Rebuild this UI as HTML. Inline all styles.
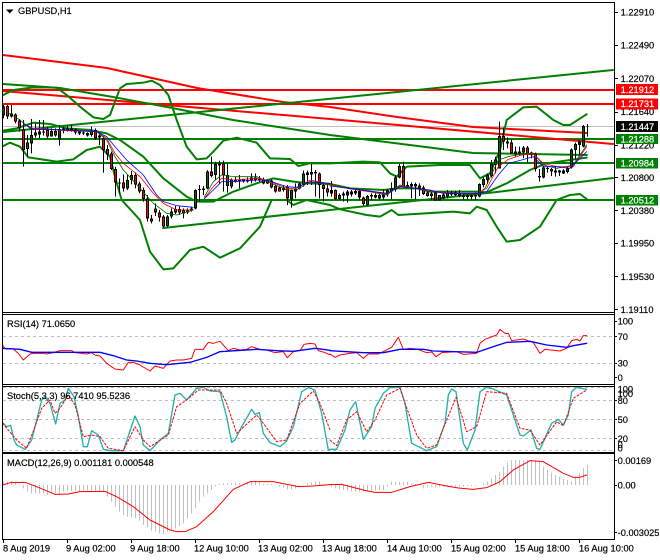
<!DOCTYPE html>
<html><head><meta charset="utf-8"><style>
html,body{margin:0;padding:0;background:#fff;width:660px;height:560px;overflow:hidden}
svg{display:block}
text{font-family:"Liberation Sans",sans-serif;font-size:9.3px;fill:#000;stroke:#000;stroke-width:.18px}
.w{fill:#fff;stroke:#fff}
polyline{stroke-linejoin:round;stroke-linecap:round}
</style></head><body>
<svg width="660" height="560" viewBox="0 0 660 560" xmlns="http://www.w3.org/2000/svg">
<rect width="660" height="560" fill="#fff"/>
<!-- horizontal lines -->
<g shape-rendering="crispEdges" fill="none">
<path d="M3 126.5H614" stroke="#c0c0c0"/>
<path d="M3 90H614M3 104H614" stroke="#f00" stroke-width="2"/>
<path d="M3 139H614M3 163H614M3 200H614" stroke="#008000" stroke-width="2"/>
</g>
<!-- trend lines -->
<g fill="none" stroke-width="2">
<polyline stroke="#f00" points="3,55 107,68 197,88 283,102 330,107 397,117 473,127 587,133"/>
<polyline stroke="#f00" points="3,91 330,119 613,144"/>
<polyline stroke="#008000" points="3,132 613,70"/>
<polyline stroke="#008000" points="3,84 60,88 113,97 167,107 233,120 330,135 473,153 587,155"/>
<polyline stroke="#008000" points="163,228 330,210 497,192 613,178"/>
</g>
<!-- bollinger -->
<g transform="scale(.33333)" fill="none" stroke="#008000" stroke-width="6">
<polyline points="10,285 40,270 100,262 170,263 200,285 240,320 280,352 310,357 330,345 360,265 380,252 430,248 455,242 480,255 505,285 530,360 560,440 590,478 620,475 640,455 670,422 710,413 770,428 810,475 870,477 895,498 930,490 990,490"/>
<polyline points="10,392 50,385 100,368 150,372 200,385 270,390 320,400 360,420 430,470 490,535 560,590 590,605 640,605 700,575 770,550 820,535 880,545 930,550 990,552"/>
<polyline points="10,438 30,428 60,440 85,472 170,485 220,478 260,450 300,440 330,470 345,530 365,600 420,660 450,755 490,808 520,805 570,750 610,740 660,773 720,745 780,680 815,600 860,600 880,615 920,600 990,615"/>
</g>
<g transform="translate(330,0) scale(.33333)" fill="none" stroke="#008000" stroke-width="6">
<polyline points="0,490 100,485 150,487 180,520 200,530 230,500 330,495 420,495 450,535 480,520 510,450 530,360 580,322 620,320 670,360 700,375 720,375 740,362 770,343"/>
<polyline points="0,552 60,565 160,570 200,565 260,565 300,575 440,575 470,577 530,550 600,510 650,490 770,473"/>
<polyline points="0,615 30,628 110,645 150,650 185,630 205,645 370,635 420,640 440,620 470,630 500,680 530,725 570,720 630,680 680,600 720,585 750,582 770,597"/>
</g>
<!-- candles -->
<g fill="none" shape-rendering="crispEdges">
<g transform="translate(0,95) scale(1,.33333)">
<path stroke="#000" d="M3.5 30V70M7.5 30V72M11.5 30V68M15.5 55V85M19.5 72V110M23.5 75V215M27.5 120V185M31.5 72V175M35.5 85V128M39.5 75V130M43.5 75V122M47.5 95V130M51.5 100V125M55.5 100V125M59.5 90V152M63.5 95V115M67.5 92V110M71.5 90V110M75.5 100V118M79.5 108V120M83.5 108V120M87.5 112V125M91.5 95V125M95.5 100V135M99.5 115V150M103.5 125V233M107.5 150V195M111.5 170V225M115.5 215V305M119.5 250V295M123.5 238V290M127.5 240V285M131.5 228V268M135.5 232V280M139.5 260V295M143.5 278V320M147.5 300V380"/>
<path stroke="#000" stroke-width="3" d="M3.5 35V62M7.5 33V65M11.5 56V64M15.5 58V80M19.5 76V100M23.5 103V165M27.5 143V162M31.5 120V146M35.5 113V122M39.5 110V118M43.5 110V113M47.5 105V125M51.5 108V125M55.5 108V122M59.5 102V133M63.5 100V105M67.5 100V106M71.5 100V105M75.5 103V112M79.5 110V116M83.5 112V116M87.5 114V122M91.5 108V120M95.5 105V130M99.5 122V128M103.5 130V165M107.5 162V178M111.5 175V222M115.5 222V262M119.5 262V266M123.5 262V280M127.5 255V280M131.5 240V255M135.5 240V268M139.5 266V290M143.5 285V312M147.5 310V370"/>
<path stroke="#f00" d="M7.5 36V62M15.5 61V77M19.5 79V97M23.5 106V162M47.5 108V122M55.5 111V119M75.5 106V109M95.5 108V127M103.5 133V162M107.5 165V175M111.5 178V219M115.5 225V259M123.5 265V277M135.5 243V265M139.5 269V287M143.5 288V309M147.5 313V367"/>
<path stroke="#006400" d="M3.5 38V59M27.5 146V159M31.5 123V143M35.5 116V119M51.5 111V122M59.5 105V130M91.5 111V117M127.5 258V277M131.5 243V252"/>
</g>
<g transform="translate(0,140) scale(1,.33333)">
<path stroke="#000" d="M151.5 225V250M155.5 190V228M159.5 210V245M163.5 225V262M167.5 225V262M171.5 205V235M175.5 198V222M179.5 200V225M183.5 205V235M187.5 205V222M191.5 200V215M195.5 148V208M199.5 135V185M203.5 138V165M207.5 90V148M211.5 50V112M215.5 65V120M219.5 62V130M223.5 62V155M227.5 70V158M231.5 115V145M235.5 110V128M239.5 105V145M243.5 118V128M247.5 112V128M251.5 100V130M255.5 100V125M259.5 108V125M263.5 113V133M267.5 118V132M271.5 118V145M275.5 133V158M279.5 140V155M283.5 135V155M287.5 135V195M291.5 148V203M295.5 130V175M299.5 128V148M303.5 92V140M307.5 92V135M311.5 72V135M315.5 90V170M319.5 97V175M323.5 128V185M327.5 130V170M331.5 123V170M335.5 148V178M339.5 160V180M343.5 155V185M347.5 150V188M351.5 150V170M355.5 150V165M359.5 150V178M363.5 170V197M367.5 165V197M371.5 160V180M375.5 160V175M379.5 158V178M383.5 148V178M387.5 148V170M391.5 127V178M395.5 105V155M399.5 72V115M403.5 65V142M407.5 125V143M411.5 127V175M415.5 128V178M419.5 130V168M423.5 137V165M427.5 155V170M431.5 155V180M435.5 155V183M439.5 165V182M443.5 160V178M447.5 150V175"/>
<path stroke="#000" stroke-width="3" d="M151.5 235V245M155.5 205V217M159.5 218V232M163.5 230V260M167.5 230V258M171.5 215V230M175.5 207V218M179.5 207V218M183.5 210V220M187.5 212V218M191.5 205V212M195.5 150V205M199.5 147V150M203.5 145V150M207.5 95V145M211.5 95V108M215.5 72V105M219.5 70V76M223.5 70V107M227.5 105V138M231.5 118V140M235.5 118V125M239.5 118V125M243.5 118V125M247.5 120V125M251.5 112V122M255.5 112V120M259.5 115V122M263.5 118V130M267.5 120V130M271.5 122V143M275.5 138V155M279.5 143V155M283.5 143V150M287.5 140V175M291.5 150V178M295.5 147V155M299.5 130V145M303.5 100V135M307.5 98V105M311.5 96V104M315.5 96V100M319.5 100V135M323.5 135V147M327.5 145V158M331.5 150V160M335.5 150V177M339.5 165V177M343.5 160V167M347.5 155V167M351.5 155V163M355.5 153V160M359.5 153V173M363.5 172V192M367.5 168V195M371.5 165V170M375.5 165V172M379.5 165V175M383.5 163V172M387.5 152V163M391.5 145V155M395.5 112V148M399.5 78V113M403.5 78V140M407.5 135V140M411.5 132V140M415.5 132V140M419.5 137V147M423.5 143V162M427.5 158V168M431.5 160V168M435.5 158V182M439.5 165V182M443.5 163V175M447.5 158V170"/>
<path stroke="#f00" d="M151.5 238V242M155.5 208V214M159.5 221V229M163.5 233V257M179.5 210V215M183.5 213V217M211.5 98V105M223.5 73V104M239.5 121V122M263.5 121V127M271.5 125V140M275.5 141V152M279.5 146V152M287.5 143V172M299.5 133V142M319.5 103V132M323.5 138V144M327.5 148V155M335.5 153V174M363.5 175V189M403.5 81V137M423.5 146V159M427.5 161V165M435.5 161V179"/>
<path stroke="#006400" d="M167.5 233V255M171.5 218V227M175.5 210V215M187.5 214V216M195.5 153V202M207.5 98V142M215.5 75V102M227.5 108V135M231.5 121V137M247.5 122V123M251.5 115V119M255.5 115V117M267.5 123V127M291.5 153V175M299.5 133V142M303.5 103V132M339.5 168V174M367.5 171V192M379.5 168V172M387.5 155V160M391.5 148V152M395.5 115V145M399.5 81V110M419.5 140V144M431.5 163V165M439.5 168V179M443.5 166V172M447.5 161V167"/>
</g>
<g transform="translate(0,100) scale(1,.33333)">
<path stroke="#000" d="M451.5 272V288M455.5 272V288M459.5 270V292M463.5 283V298M467.5 283V298M471.5 280V298M475.5 278V300M479.5 250V292M483.5 232V262M487.5 220V252M491.5 180V232M495.5 170V220M499.5 65V205M503.5 82V150M507.5 112V145M511.5 118V162M515.5 140V170M519.5 140V168M523.5 138V175M527.5 138V188M531.5 155V175M535.5 158V215M539.5 207V245M543.5 198V235M547.5 200V218M551.5 204V228M555.5 200V230M559.5 210V228M563.5 208V222M567.5 198V220M571.5 145V206M575.5 128V178M579.5 120V165M583.5 75V142M587.5 72V110"/>
<path stroke="#000" stroke-width="3" d="M451.5 278V283M455.5 278V285M459.5 280V288M463.5 287V291M467.5 287V291M471.5 287V291M475.5 285V290M479.5 252V290M483.5 237V255M487.5 225V240M491.5 190V228M495.5 178V195M499.5 108V205M503.5 108V125M507.5 125V130M511.5 128V160M515.5 155V163M519.5 155V160M523.5 142V158M527.5 142V162M531.5 158V165M535.5 160V207M539.5 228V232M543.5 202V232M547.5 204V207M551.5 207V214M555.5 212V218M559.5 212V218M563.5 212V220M567.5 205V216M571.5 148V203M575.5 132V150M579.5 125V135M583.5 78V140"/>
<path stroke="#000" d="M586 79.5H589"/>
<path stroke="#f00" d="M463.5 288V289M503.5 111V122M511.5 131V157M527.5 145V159M535.5 163V204M551.5 209V211"/>
<path stroke="#006400" d="M479.5 255V287M483.5 240V252M487.5 228V237M491.5 193V225M495.5 181V192M499.5 111V202M515.5 158V160M523.5 145V155M543.5 205V229M567.5 208V213M571.5 151V200M575.5 135V147M583.5 81V137"/>
</g>
</g>
<!-- moving averages -->
<g transform="scale(.33333)" fill="none" stroke-width="2.4">
<polyline stroke="#006400" points="20,335 60,360 90,385 200,390 290,395 320,420 345,470 370,510 420,565 460,610 500,640 530,645 580,630"/>
<polyline stroke="#006400" points="613,590 640,545 665,525 700,530 770,530 860,570 890,570 930,545 990,555"/>
<polyline stroke="#f00" points="70,372 100,385 200,392 290,395 320,415 345,460 370,490 420,530 460,580 490,610 530,630 580,630"/>
<polyline stroke="#f00" points="613,595 640,560 665,535 700,540 770,535 800,540 860,565 890,565 930,540 990,552"/>
<polyline stroke="#00f" points="70,370 100,388 200,390 290,395 320,410 345,440 380,480 430,525 470,585 490,605 530,617 580,622"/>
<polyline stroke="#00f" points="613,596 640,570 665,545 700,545 770,540 800,540 830,550 860,560 890,562 930,545 990,550"/>
</g>
<g transform="translate(330,0) scale(.33333)" fill="none" stroke-width="2.4">
<polyline stroke="#006400" points="0,552 170,585 210,555 300,575 440,585 465,565 505,480 535,470 575,462 610,460 640,495 680,505 730,495 770,435"/>
<polyline stroke="#f00" points="0,555 80,570 170,582 210,558 300,572 340,578 440,582 470,565 505,500 535,478 575,465 610,462 640,490 680,500 730,500 770,440"/>
<polyline stroke="#00f" points="0,558 80,568 170,580 210,560 300,570 340,580 440,580 470,575 505,525 535,490 575,480 610,470 640,500 680,500 720,505 770,455"/>
</g>
<!-- level lines -->
<g shape-rendering="crispEdges" fill="none" stroke="#c0c0c0" stroke-dasharray="3 3">
<path d="M3 336.5H614M3 363.5H614M3 387.5H614M3 400.5H614M3 419.5H614M3 438.5H614M3 450.5H614"/>
</g>
<!-- RSI -->
<g transform="translate(0,280) scale(.33333)" fill="none" stroke-width="3">
<polyline stroke="#f00" points="8,195 15,207 40,207 55,220 70,240 90,222 100,220 130,220 140,222 160,218 180,212 215,212 225,218 260,222 275,218 285,225 300,228 320,250 345,267 370,270 385,247 400,247 420,255 450,273 465,258 490,265 510,243 530,240 550,240 575,235 585,208 610,208 625,187 640,190 660,184 685,212 700,205 720,210 740,208 755,200 780,208 800,210 825,218 850,215 862,233 880,215 900,212 912,193 930,190 945,192 955,212 975,218 990,224"/>
<polyline stroke="#00f" stroke-width="4" points="8,205 60,208 95,217 300,217 340,227 380,240 410,243 450,250 500,254 570,247 620,232 660,215 770,208 830,212 880,214 945,205 990,211"/>
<polyline stroke="#20b2aa" stroke-width="4" points="8,428 20,440 32,436 42,480 50,495 75,508 95,480 110,420 125,360 135,352 150,370 167,432 180,370 195,360 205,325 222,350 235,410 250,500 262,500 275,452 295,465 310,508 330,512 370,512 405,408 420,440 430,495 450,512 480,480 505,460 525,345 540,340 560,360 590,325 610,322 630,333 660,335 680,410 695,487 705,480 725,440 755,388 765,403 778,398 790,460 810,488 840,500 860,483 880,440 905,335 925,323 945,330 965,400 985,510 990,510"/>
<polyline stroke="#f00" stroke-dasharray="6 6" points="8,430 50,480 80,505 105,440 125,385 150,360 165,400 180,385 205,345 225,375 250,470 275,465 300,470 325,505 370,512 405,440 430,480 450,500 505,465 530,380 560,360 595,330 660,330 680,370 710,460 770,405 790,430 830,485 860,480 900,370 940,333 960,370 990,450"/>
</g>
<g transform="translate(330,280) scale(.33333)" fill="none" stroke-width="3">
<polyline stroke="#f00" points="0,222 15,232 30,225 60,220 80,218 100,235 115,222 145,222 165,212 185,202 205,172 220,208 240,205 260,207 290,218 305,216 318,230 335,218 380,215 400,223 440,220 450,190 465,178 500,165 510,148 525,160 535,160 545,182 580,177 610,188 630,220 645,208 690,213 710,205 725,182 740,178 750,183 760,167 770,167"/>
<polyline stroke="#00f" stroke-width="4" points="0,212 100,218 160,218 210,208 280,208 310,213 440,217 490,200 530,187 600,184 650,195 710,202 730,197 770,190"/>
<polyline stroke="#20b2aa" stroke-width="4" points="0,508 20,508 45,450 60,390 77,365 100,478 125,440 135,385 160,340 180,323 210,322 225,370 245,490 290,512 320,500 345,430 355,345 365,327 378,335 400,490 412,510 435,450 450,335 470,322 490,327 530,345 570,465 580,468 603,450 620,505 630,508 665,430 685,418 700,435 715,405 725,335 740,322 770,328"/>
<polyline stroke="#f00" stroke-dasharray="6 6" points="0,480 20,497 50,420 80,395 110,455 135,420 170,345 210,325 225,370 260,465 290,505 320,495 350,420 378,352 410,455 440,440 470,335 530,340 570,445 600,450 630,495 680,425 700,437 730,355 770,330"/>
</g>
<!-- MACD histogram -->
<g transform="translate(0,280) scale(1,.33333)" shape-rendering="crispEdges" fill="none">
<path stroke="#c0c0c0" d="M3.5 615V605M7.5 615V605M11.5 615V603M15.5 615V605M19.5 615V612M23.5 615V625M27.5 615V635M31.5 615V640M35.5 615V640M39.5 615V640M43.5 615V640M47.5 615V645M51.5 615V640M55.5 615V640M59.5 615V640M63.5 615V635M67.5 615V633M71.5 615V633M75.5 615V633M79.5 615V633M83.5 615V632M87.5 615V632M91.5 615V632M95.5 615V633M99.5 615V633M103.5 615V632M107.5 615V650M111.5 615V665M115.5 615V680M119.5 615V695M123.5 615V705M127.5 615V710M131.5 615V712M135.5 615V715M139.5 615V722M143.5 615V735M147.5 615V743M151.5 615V752M155.5 615V755M159.5 615V760M163.5 615V762M167.5 615V755M171.5 615V750M175.5 615V745M179.5 615V738M183.5 615V730M187.5 615V715M191.5 615V700M195.5 615V685M199.5 615V665M203.5 615V650M207.5 615V640M211.5 615V630M215.5 615V620M219.5 615V612M223.5 615V610M227.5 615V610M231.5 615V610M235.5 615V608M239.5 615V610M243.5 615V610M247.5 615V605M251.5 615V605M255.5 615V605M259.5 615V608M263.5 615V612M267.5 615V612M271.5 615V612M279.5 615V620M283.5 615V622M287.5 615V628M291.5 615V628M295.5 615V625M299.5 615V620M307.5 615V610M311.5 615V608M315.5 615V604M319.5 615V604M323.5 615V612M331.5 615V620M335.5 615V625M339.5 615V628M343.5 615V630M347.5 615V632M351.5 615V634M355.5 615V634M359.5 615V635M363.5 615V635M367.5 615V632M371.5 615V632M375.5 615V632M379.5 615V630M383.5 615V630M387.5 615V620M391.5 615V605M395.5 615V606M399.5 615V606M403.5 615V606M407.5 615V606M411.5 615V610M415.5 615V612M423.5 615V625M427.5 615V622M431.5 615V620M435.5 615V622M439.5 615V620M443.5 615V620M447.5 615V618M451.5 615V620M455.5 615V620M459.5 615V620M463.5 615V620M467.5 615V618M471.5 615V618M475.5 615V618M483.5 615V610M487.5 615V605M491.5 615V595M495.5 615V585M499.5 615V575M503.5 615V560M507.5 615V548M511.5 615V540M515.5 615V540M519.5 615V540M523.5 615V540M527.5 615V540M531.5 615V540M535.5 615V540M539.5 615V545M543.5 615V560M547.5 615V570M551.5 615V578M555.5 615V585M559.5 615V590M563.5 615V597M567.5 615V600M571.5 615V605M575.5 615V590M579.5 615V580M583.5 615V565M587.5 615V555"/>
</g>
<!-- MACD signal over histogram -->
<g transform="translate(0,280) scale(.33333)" fill="none" stroke="#f00" stroke-width="3">
<polyline points="8,615 30,608 75,607 110,620 165,643 205,642 240,635 315,634 350,650 400,680 450,720 510,750 530,755 555,755 590,740 640,695 700,628 750,605 820,605 895,620 940,618 990,614"/>
</g>
<g transform="translate(330,280) scale(.33333)" fill="none" stroke="#f00" stroke-width="3">
<polyline points="0,614 35,613 100,630 135,637 185,637 240,620 295,607 350,618 385,624 430,628 470,623 510,605 550,570 600,542 640,545 700,580 730,592 750,592 770,585"/>
</g>
<!-- frames -->
<g shape-rendering="crispEdges" fill="#000">
<rect x="2" y="2" width="613" height="1"/>
<rect x="2" y="2" width="1" height="538"/>
<rect x="614" y="2" width="1" height="538"/>
<rect x="2" y="312" width="613" height="1"/>
<rect x="2" y="314" width="613" height="1"/>
<rect x="2" y="384" width="613" height="1"/>
<rect x="2" y="386" width="613" height="1"/>
<rect x="2" y="452" width="613" height="1"/>
<rect x="2" y="453" width="613" height="1"/>
<rect x="2" y="539" width="613" height="1"/>
<path d="M615 12h3v1h-3zM615 45h3v1h-3zM615 78h3v1h-3zM615 112h3v1h-3zM615 145h3v1h-3zM615 177h3v1h-3zM615 210h3v1h-3zM615 243h3v1h-3zM615 276h3v1h-3zM615 309h3v1h-3zM615 321h2v1h-2zM615 336h2v1h-2zM615 363h2v1h-2zM615 377h2v1h-2zM615 400h2v1h-2zM615 419h2v1h-2zM615 438h2v1h-2zM615 460h2v1h-2zM615 485h2v1h-2zM615 532h2v1h-2z"/>
<path d="M3 540h1v3h-1zM67 540h1v3h-1zM131 540h1v3h-1zM195 540h1v3h-1zM259 540h1v3h-1zM323 540h1v3h-1zM387 540h1v3h-1zM451 540h1v3h-1zM515 540h1v3h-1zM579 540h1v3h-1z"/>
</g>
<path d="M6 9.5H13.5L9.7 13.5Z" fill="#000"/>
<!-- chart titles -->
<text x="18" y="14">GBPUSD,H1</text>
<text x="7" y="327.2">RSI(14) 71.0650</text>
<text x="7" y="399.2">Stoch(5,3,3) 96.7410 95.5236</text>
<text x="7" y="466.2">MACD(12,26,9) 0.001181 0.000548</text>
<!-- price axis -->
<text x="620.6" y="15.6">1.22910</text>
<text x="620.6" y="48.6">1.22490</text>
<text x="620.6" y="82">1.22070</text>
<text x="620.6" y="115.2">1.21640</text>
<text x="620.6" y="148.6">1.21220</text>
<text x="620.6" y="181">1.20800</text>
<text x="620.6" y="214">1.20380</text>
<text x="620.6" y="246.6">1.19950</text>
<text x="620.6" y="280">1.19530</text>
<text x="620.6" y="313">1.19110</text>
<g shape-rendering="crispEdges">
<rect x="616" y="84" width="42" height="11" fill="#f00"/>
<rect x="616" y="98.5" width="42" height="11" fill="#f00"/>
<rect x="616" y="121" width="42" height="11" fill="#000"/>
<rect x="616" y="134" width="42" height="10" fill="#008000"/>
<rect x="616" y="158" width="42" height="10.5" fill="#008000"/>
<rect x="616" y="195" width="42" height="10.5" fill="#008000"/>
</g>
<text class="w" x="620.6" y="92.8">1.21912</text>
<text class="w" x="620.6" y="107">1.21731</text>
<text class="w" x="620.6" y="130">1.21447</text>
<text class="w" x="620.6" y="142.6">1.21288</text>
<text class="w" x="620.6" y="166.6">1.20984</text>
<text class="w" x="620.6" y="203.6">1.20512</text>
<!-- sub-window axes -->
<text x="617.6" y="324.6">100</text>
<text x="617.6" y="340">70</text>
<text x="617.6" y="366.6">30</text>
<text x="617.6" y="381">0</text>
<text x="617.6" y="392.6">100</text>
<text x="617.6" y="396.8">100</text>
<text x="617.6" y="404">80</text>
<text x="617.6" y="423">50</text>
<text x="617.6" y="442">20</text>
<text x="617.6" y="447.8">0</text>
<text x="617.6" y="451.4">0</text>
<text x="617.6" y="464">0.00169</text>
<text x="617.6" y="488.4">0.00</text>
<text x="617.6" y="536">-0.003025</text>
<!-- time axis -->
<text x="3" y="551.5">8 Aug 2019</text>
<text x="66" y="551.5">9 Aug 02:00</text>
<text x="130" y="551.5">9 Aug 18:00</text>
<text x="194" y="551.5">12 Aug 10:00</text>
<text x="258" y="551.5">13 Aug 02:00</text>
<text x="322" y="551.5">13 Aug 18:00</text>
<text x="387" y="551.5">14 Aug 10:00</text>
<text x="451" y="551.5">15 Aug 02:00</text>
<text x="515" y="551.5">15 Aug 18:00</text>
<text x="579" y="551.5">16 Aug 10:00</text>
</svg>
</body></html>
